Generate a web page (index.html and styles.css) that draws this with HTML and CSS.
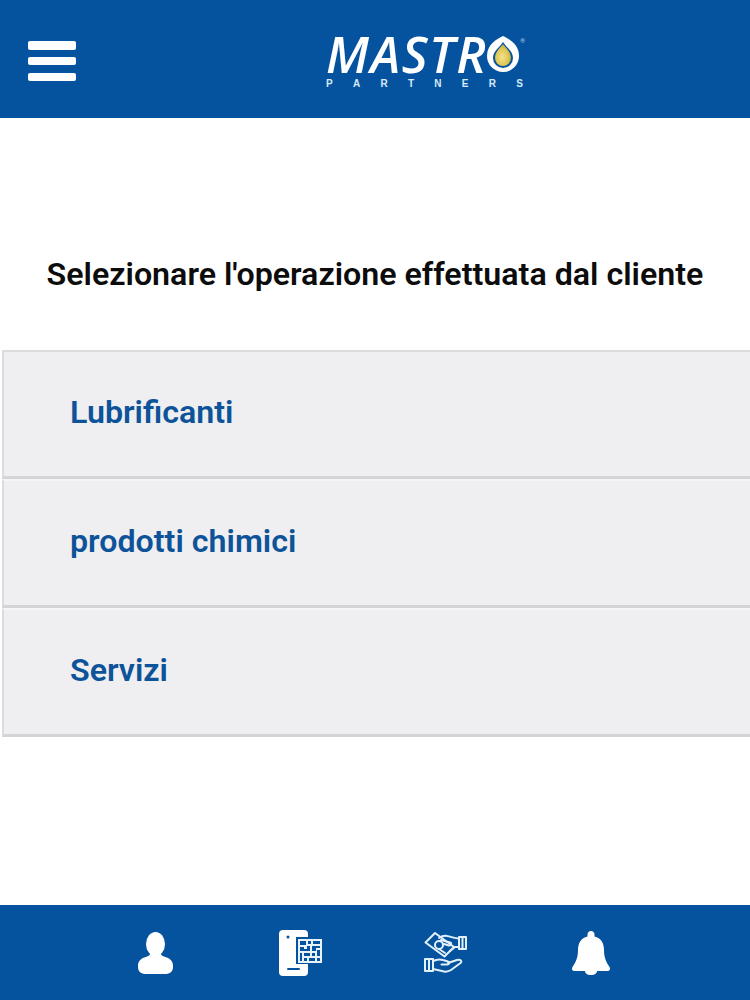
FILE: index.html
```html
<!DOCTYPE html>
<html lang="it">
<head>
<meta charset="utf-8">
<title>Mastro Partners</title>
<link rel="stylesheet" href="styles.css">
</head>
<body>
<div class="page">
  <header class="topbar">
    <div class="burger"><span></span><span></span><span></span></div>
    <div class="logo">
      <div class="logo-main">
        <span class="logo-word">MASTR</span>
        <svg class="logo-o" viewBox="0 0 34 36" width="34" height="36" aria-hidden="true">
          <defs>
            <radialGradient id="oil" cx="0.45" cy="0.6" r="0.6">
              <stop offset="0" stop-color="#f4e28e"/>
              <stop offset="0.7" stop-color="#dcc44e"/>
              <stop offset="1" stop-color="#a9a544"/>
            </radialGradient>
          </defs>
          <path d="M17 0C11 3 1 8 1 20a16 16 0 0 0 32 0C33 8 23 3 17 0z" fill="#fff"/>
          <path d="M17 6C14 11 7 15 7 22a10 10 0 0 0 20 0C27 15 20 11 17 6z" fill="#05539f"/>
          <path d="M17 8C14 12 9 16 9 22a8 8 0 0 0 16 0C25 16 20 12 17 8z" fill="url(#oil)"/>
        </svg>
        <span class="logo-reg">®</span>
      </div>
      <div class="logo-sub"><span>P</span><span>A</span><span>R</span><span>T</span><span>N</span><span>E</span><span>R</span><span>S</span></div>
    </div>
  </header>

  <main class="content">
    <h1 class="title">Selezionare l'operazione effettuata dal cliente</h1>
    <ul class="options">
      <li class="option">Lubrificanti</li>
      <li class="option">prodotti chimici</li>
      <li class="option">Servizi</li>
    </ul>
  </main>

  <footer class="tabbar">
    <div class="tab">
      <svg viewBox="0 0 35 42" width="35" height="42" aria-hidden="true">
        <ellipse cx="17.500" cy="12" rx="9.500" ry="12" fill="#fff"/>
        <path d="M12 20h11v2c0 1.500 2 2.200 5 3.200 4.500 1.500 7 4 7 8.800v1c0 4.500-3 7-8 7H8c-5 0-8-2.500-8-7v-1c0-4.800 2.500-7.300 7-8.800 3-1 5-1.700 5-3.200z" fill="#fff"/>
      </svg>
    </div>
    <div class="tab">
      <svg viewBox="0 0 44 46" width="44" height="46" aria-hidden="true">
        <rect x="0" y="0" width="29" height="46" rx="4" fill="#fff"/>
        <circle cx="9" cy="7" r="1.500" fill="#05539f"/>
        <rect x="8" y="38" width="13" height="2" rx="1" fill="#05539f"/>
        <rect x="17" y="7" width="27" height="27" fill="#05539f"/>
        <rect x="19" y="9" width="24" height="24" fill="#e8f2fa"/>
        <path d="M21 11h6v4h-6zM29 11h3v3h-3zM34 11h7v3h-7zM21 17h4v2h3v-3h3v5h-10zM33 16h8v2h-4v3h-4zM21 23h2v8h-2zM25 23h6v3h-6zM33 23h3v3h-3zM38 20h3v6h-3zM25 28h3v3h-3zM30 28h6v3h-6zM38 28h3v3h-3z" fill="#05539f"/>
      </svg>
    </div>
    <div class="tab">
      <svg viewBox="0 0 44 42" width="44" height="42" aria-hidden="true" fill="none" stroke="#e2f0f9" stroke-width="2" stroke-linejoin="round" stroke-linecap="round">
        <rect x="35" y="5" width="7" height="12"/>
        <path d="M38.500 5v12M35 6.500c-5 0-8-2-12-2.500-3-.5-5 0-8 2"/>
        <path d="M35 15h-4l-5 4"/>
        <path d="M1.500 10.500 11 1l19 14-9.500 9.500z"/>
        <circle cx="15" cy="13" r="4"/>
        <path d="M17 8l9 2.500c2 .8 1 3.500-1 3l-5-1.500M15 17l6 4"/>
        <rect x="1" y="27" width="8" height="12"/>
        <path d="M5 27v12M9 29c3-1.500 7-2 10-1l5 1.500c2 .5 1.500 3-.5 3h-6"/>
        <path d="M24 31l9-3c3.500-1 5.500 1 3.500 3L27 38c-3 2-6 2-9 1l-9-2"/>
      </svg>
    </div>
    <div class="tab">
      <svg viewBox="0 0 38 44" width="38" height="44" aria-hidden="true">
        <path d="M19 0c2 0 3.500 1.500 3.500 3.500v2C29 7 32 12 32 19c0 7 2 12 5.500 17 1 1.500.5 4-1.500 4H25c0 2.500-2.500 4-6 4s-6-1.500-6-4H2C0 40-.5 37.500.5 36 4 31 6 26 6 19c0-7 3-12 9.500-13.500v-2C15.500 1.500 17 0 19 0z" fill="#fff"/>
      </svg>
    </div>
  </footer>
</div>
</body>
</html>
```

FILE: styles.css
```css
* { box-sizing: border-box; }

html, body {
  margin: 0;
  padding: 0;
  background: #fff;
}

.page {
  width: 750px;
  height: 1000px;
  display: flex;
  flex-direction: column;
  font-family: Roboto, "Liberation Sans", sans-serif;
  overflow: hidden;
}

.topbar {
  height: 118px;
  flex: none;
  background: #05539f;
  display: grid;
  grid-template-columns: 298px auto;
  padding-left: 28px;
}

.burger {
  width: 48px;
  height: 40px;
  margin-top: 41px;
  display: flex;
  flex-direction: column;
  justify-content: space-between;
}

.burger span {
  display: block;
  height: 8.500px;
  background: #fff;
  border-radius: 2px;
}

.logo {
  padding-top: 36px;
  width: 204px;
}

.logo-main {
  display: flex;
  align-items: center;
  height: 36px;
  color: #fff;
}

.logo-word {
  font-family: "Open Sans", "Liberation Sans", sans-serif;
  font-weight: 600;
  font-style: italic;
  font-size: 50px;
  line-height: 36px;
  letter-spacing: 1.500px;
}

.logo-o {
  flex: none;
  margin-left: -1px;
}

.logo-reg {
  font-size: 6px;
  line-height: 8px;
  align-self: flex-start;
  margin-top: 1px;
  color: #b9d3ea;
}

.logo-sub {
  display: flex;
  justify-content: space-between;
  margin-top: 6px;
  width: 197px;
  font-family: "Liberation Sans", sans-serif;
  font-weight: 700;
  font-size: 10px;
  line-height: 12px;
  color: #d6eaf7;
}

.content {
  flex: 1;
  padding-top: 137px;
}

.title {
  margin: 0;
  font-size: 32.200px;
  line-height: 38px;
  font-weight: 600;
  color: #0c0c0c;
  text-align: center;
  white-space: nowrap;
}

.options {
  list-style: none;
  margin: 57px 0 0 2px;
  padding: 0;
}

.option {
  height: 129px;
  padding: 0 0 4px 66px;
  display: flex;
  align-items: center;
  background: #efeef0;
  border: 2px solid #dcdcdc;
  border-right: 0;
  border-bottom: 3px solid #d4d3d5;
  font-size: 32.200px;
  font-weight: 600;
  color: #0d5399;
}

.option + .option {
  border-top: 2px solid #f5f5f6;
}

.tabbar {
  height: 95px;
  flex: none;
  background: #05539f;
  display: grid;
  grid-template-columns: repeat(4, 145px);
  padding-left: 83px;
  align-items: center;
}

.tab {
  display: flex;
  justify-content: center;
  align-items: center;
  height: 46px;
  margin-top: 1px;
}
```
